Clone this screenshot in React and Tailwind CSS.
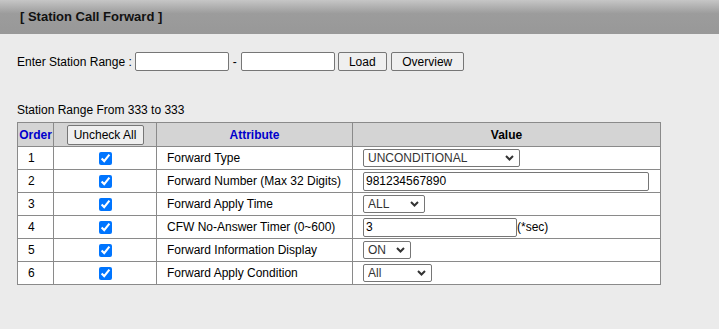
import { useState } from "react";

const rows = [
  { id: 1, name: "Forward Type", kind: "select", value: "UNCONDITIONAL", w: "w-[157px]", options: ["UNCONDITIONAL", "BUSY", "NO ANSWER", "BUSY/NO ANSWER"] },
  { id: 2, name: "Forward Number (Max 32 Digits)", kind: "input", value: "981234567890", w: "w-[286px]" },
  { id: 3, name: "Forward Apply Time", kind: "select", value: "ALL", w: "w-[62px]", options: ["ALL", "DAY", "NIGHT"] },
  { id: 4, name: "CFW No-Answer Timer (0~600)", kind: "input", value: "3", w: "w-[154px]", suffix: "(*sec)" },
  { id: 5, name: "Forward Information Display", kind: "select", value: "ON", w: "w-[48px]", options: ["ON", "OFF"] },
  { id: 6, name: "Forward Apply Condition", kind: "select", value: "All", w: "w-[69px]", options: ["All", "Internal", "External"] },
];

function Select({ value, options, w }) {
  return (
    <div className={`relative inline-block ${w}`}>
      <select
        defaultValue={value}
        className="w-full h-[18px] appearance-none bg-white border border-[#767676] rounded-[2px] pl-[4px] pr-[18px] text-[12px] leading-[16px] text-[#333]"
      >
        {options.map((o) => (
          <option key={o}>{o}</option>
        ))}
      </select>
      <svg
        className="absolute right-[6px] top-[6px] w-[9px] h-[6px] pointer-events-none"
        viewBox="0 0 9 6"
        fill="none"
        stroke="#333"
        strokeWidth={2}
      >
        <path d="M1 1l3.5 3.5L8 1" />
      </svg>
    </div>
  );
}

export default function App() {
  const [checked, setChecked] = useState(rows.map(() => true));

  const toggle = (i) =>
    setChecked(checked.map((c, j) => (j === i ? !c : c)));

  return (
    <div
      className="w-[719px] h-[329px] bg-[#ebebeb] text-[12px] text-black"
      style={{ fontFamily: '"Liberation Sans", Arial, sans-serif' }}
    >
      <div className="h-[34px] px-[20px] flex items-center bg-gradient-to-b from-[#c6c6c6] via-[#9c9c9c] via-40% to-[#989898]">
        <span className="text-[13px] font-bold text-[#111]">[ Station Call Forward ]</span>
      </div>

      <div className="px-[17px]">
        <div className="mt-[18px] flex items-center h-[19px]">
          <span>Enter Station Range :</span>
          <input className="ml-[3px] w-[94px] h-[19px] bg-white border border-[#767676] rounded-[2px]" />
          <span className="mx-[4px]">-</span>
          <input className="w-[94px] h-[19px] bg-white border border-[#767676] rounded-[2px]" />
          <button className="ml-[3px] w-[49px] h-[19px] bg-[#efefef] border border-[#767676] rounded-[2px]">Load</button>
          <button className="ml-[4px] w-[73px] h-[19px] bg-[#efefef] border border-[#767676] rounded-[2px]">Overview</button>
        </div>

        <div className="mt-[32px] leading-[14px]">Station Range From 333 to 333</div>

        <table className="mt-[5px] w-[643px] table-fixed border-collapse bg-white">
          <colgroup>
            <col className="w-[36px]" />
            <col className="w-[103px]" />
            <col className="w-[196px]" />
            <col className="w-[308px]" />
          </colgroup>
          <thead>
            <tr className="h-[24px] bg-[#d4d4d4]">
              <th className="border border-[#8a8a8a] font-bold text-[#0000cc] px-0">Order</th>
              <th className="border border-[#8a8a8a] text-center">
                <button
                  onClick={() => setChecked(rows.map(() => false))}
                  className="w-[77px] h-[20px] bg-[#efefef] border border-[#767676] rounded-[2px] font-normal align-middle"
                >
                  Uncheck All
                </button>
              </th>
              <th className="border border-[#8a8a8a] font-bold text-[#0000cc]">Attribute</th>
              <th className="border border-[#8a8a8a] font-bold">Value</th>
            </tr>
          </thead>
          <tbody>
            {rows.map((r, i) => (
              <tr key={r.id} className="h-[23px]">
                <td className="border border-[#8a8a8a] pl-[10px]">{r.id}</td>
                <td className="border border-[#8a8a8a] text-center">
                  <input
                    type="checkbox"
                    checked={checked[i]}
                    onChange={() => toggle(i)}
                    className="w-[13px] h-[13px] align-middle"
                  />
                </td>
                <td className="border border-[#8a8a8a] pl-[10px]">{r.name}</td>
                <td className="border border-[#8a8a8a] pl-[10px]">
                  <div className="flex items-center">
                    {r.kind === "select" ? (
                      <Select value={r.value} options={r.options} w={r.w} />
                    ) : (
                      <>
                        <input
                          defaultValue={r.value}
                          className={`${r.w} h-[19px] bg-white border border-[#767676] rounded-[2px] px-[2px]`}
                        />
                        {r.suffix && <span>{r.suffix}</span>}
                      </>
                    )}
                  </div>
                </td>
              </tr>
            ))}
          </tbody>
        </table>
      </div>
    </div>
  );
}
